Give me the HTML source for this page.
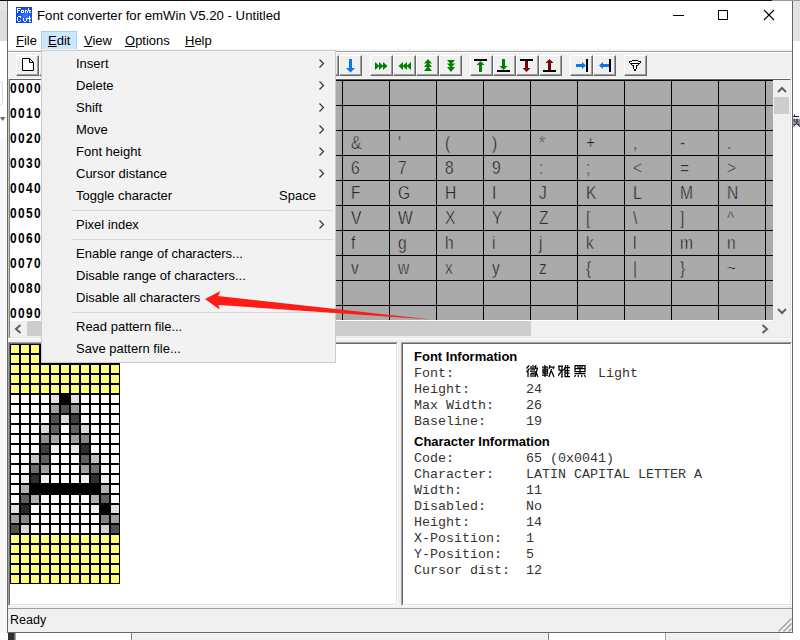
<!DOCTYPE html><html><head><meta charset="utf-8"><style>
html,body{margin:0;padding:0;width:800px;height:640px;overflow:hidden;background:#fff;position:relative}
div{position:absolute;box-sizing:border-box}
.t{white-space:pre;font-family:"Liberation Sans",sans-serif;font-size:13px;line-height:16px;color:#000}
.m{font-family:"Liberation Mono",monospace;font-size:13.33px;line-height:16px;white-space:pre;color:#333}
</style></head><body>
<div style="left:0px;top:1px;width:7px;height:10px;background:#e4e5e8"></div>
<div style="left:0px;top:11px;width:7px;height:30px;background:#dcdde0"></div>
<div style="left:793px;top:1px;width:7px;height:40px;background:#e1e2e5"></div>
<div style="left:0px;top:0px;width:772px;height:1px;background:#111"></div>
<div style="left:772px;top:0px;width:28px;height:1px;background:#999"></div>
<div style="left:0px;top:41px;width:7px;height:592px;background:#fff"></div>
<div style="left:0px;top:139px;width:7px;height:494px;background:#f8f8f8"></div>
<div style="left:-6px;top:81px;width:9px;height:24px;border:1px solid #d6d6d6;border-radius:3px"></div>
<svg style="position:absolute;left:0;top:117px" width="6" height="5"><path d="M0 0 H5.5 L2.75 4 Z" fill="#5a6a8c"/></svg>
<div style="left:8px;top:633px;width:6px;height:7px;background:#303030"></div>
<div style="left:14px;top:633px;width:2px;height:7px;background:linear-gradient(90deg,#555,#bbb)"></div>
<div style="left:131px;top:633px;width:1px;height:7px;background:#808080"></div>
<div style="left:132px;top:633px;width:417px;height:7px;background:#f0f0f0"></div>
<div style="left:548px;top:633px;width:1px;height:7px;background:#808080"></div>
<div style="left:665px;top:633px;width:1px;height:7px;background:#a0a0a0"></div>
<div style="left:666px;top:633px;width:134px;height:7px;background:#f0f0f0"></div>
<div style="left:780px;top:633px;width:20px;height:7px;background:#fff"></div>
<svg style="position:absolute;left:793px;top:114px" width="7" height="13"><path d="M2 0.5 L0.5 3 M1 2.5 H6 M1 4.5 V8 H7 M1 6 H7 M4 4.5 V9 M0 10 H7 M3.5 9 L0.5 12.5 M4.5 10 L7 12.5" fill="none" stroke="#1a2040" stroke-width="1.1"/></svg>
<div style="left:7px;top:1px;width:786px;height:632px;background:#fff;border:1px solid #666;border-top:none"></div>
<div class="t" style="left:37px;top:8px;font-size:13.2px">Font converter for emWin V5.20 - Untitled</div>
<div style="left:41px;top:31px;width:36px;height:19px;background:#cce8ff;border:1px solid #99d1ff"></div>
<div class="t" style="left:16px;top:33px;"><u>F</u>ile</div>
<div class="t" style="left:48px;top:33px;"><u>E</u>dit</div>
<div class="t" style="left:84px;top:33px;"><u>V</u>iew</div>
<div class="t" style="left:125px;top:33px;"><u>O</u>ptions</div>
<div class="t" style="left:185px;top:33px;"><u>H</u>elp</div>
<div style="left:8px;top:49px;width:784px;height:2px;background:#f4f4f4"></div>
<div style="left:8px;top:51px;width:784px;height:1px;background:#a0a0a0"></div>
<div style="left:8px;top:52px;width:784px;height:580px;background:#f0f0f0;border-top:1px solid #fff"></div>
<div style="left:16px;top:7px;width:16px;height:16px;background:radial-gradient(circle at 60% 55%,#3a78ff,#0a3cf5 75%)"></div>
<svg style="position:absolute;left:16px;top:7px" width="16" height="16" shape-rendering="crispEdges"><g fill="#fff"><rect x="1" y="1" width="4" height="1"/><rect x="12" y="1" width="1" height="1"/><rect x="1" y="2" width="1" height="1"/><rect x="12" y="2" width="1" height="1"/><rect x="1" y="3" width="3" height="1"/><rect x="5" y="3" width="3" height="1"/><rect x="9" y="3" width="2" height="1"/><rect x="12" y="3" width="3" height="1"/><rect x="1" y="4" width="1" height="1"/><rect x="5" y="4" width="1" height="1"/><rect x="7" y="4" width="1" height="1"/><rect x="9" y="4" width="1" height="1"/><rect x="11" y="4" width="1" height="1"/><rect x="13" y="4" width="1" height="1"/><rect x="1" y="5" width="1" height="1"/><rect x="5" y="5" width="3" height="1"/><rect x="9" y="5" width="1" height="1"/><rect x="11" y="5" width="1" height="1"/><rect x="13" y="5" width="2" height="1"/><rect x="2" y="9" width="3" height="1"/><rect x="13" y="9" width="1" height="1"/><rect x="1" y="10" width="1" height="1"/><rect x="4" y="10" width="1" height="1"/><rect x="13" y="10" width="1" height="1"/><rect x="1" y="11" width="1" height="1"/><rect x="7" y="11" width="1" height="1"/><rect x="10" y="11" width="1" height="1"/><rect x="11" y="11" width="4" height="1"/><rect x="1" y="12" width="1" height="1"/><rect x="7" y="12" width="1" height="1"/><rect x="10" y="12" width="1" height="1"/><rect x="13" y="12" width="1" height="1"/><rect x="1" y="13" width="1" height="1"/><rect x="4" y="13" width="1" height="1"/><rect x="7" y="13" width="1" height="1"/><rect x="10" y="13" width="1" height="1"/><rect x="13" y="13" width="1" height="1"/><rect x="2" y="14" width="2" height="1"/><rect x="8" y="14" width="2" height="1"/><rect x="13" y="14" width="2" height="1"/></g></svg>
<div style="left:673px;top:15px;width:11px;height:1px;background:#000"></div>
<div style="left:718px;top:10px;width:10px;height:10px;border:1px solid #000"></div>
<svg style="position:absolute;left:763px;top:9px" width="12" height="12"><path d="M1 1 L11 11 M11 1 L1 11" stroke="#000" stroke-width="1.1"/></svg>
<div style="left:16px;top:55px;width:23px;height:21px;background:#f0f0f0;border-left:1px solid #fff;border-top:1px solid #fff;border-right:1px solid #696969;border-bottom:1px solid #696969;box-shadow:inset -1px -1px 0 #a0a0a0"></div>
<div style="left:39px;top:55px;width:23px;height:21px;background:#f0f0f0;border-left:1px solid #fff;border-top:1px solid #fff;border-right:1px solid #696969;border-bottom:1px solid #696969;box-shadow:inset -1px -1px 0 #a0a0a0"></div>
<div style="left:316px;top:55px;width:23px;height:21px;background:#f0f0f0;border-left:1px solid #fff;border-top:1px solid #fff;border-right:1px solid #696969;border-bottom:1px solid #696969;box-shadow:inset -1px -1px 0 #a0a0a0"></div>
<div style="left:339px;top:55px;width:23px;height:21px;background:#f0f0f0;border-left:1px solid #fff;border-top:1px solid #fff;border-right:1px solid #696969;border-bottom:1px solid #696969;box-shadow:inset -1px -1px 0 #a0a0a0"></div>
<div style="left:370px;top:55px;width:23px;height:21px;background:#f0f0f0;border-left:1px solid #fff;border-top:1px solid #fff;border-right:1px solid #696969;border-bottom:1px solid #696969;box-shadow:inset -1px -1px 0 #a0a0a0"></div>
<div style="left:393px;top:55px;width:23px;height:21px;background:#f0f0f0;border-left:1px solid #fff;border-top:1px solid #fff;border-right:1px solid #696969;border-bottom:1px solid #696969;box-shadow:inset -1px -1px 0 #a0a0a0"></div>
<div style="left:416px;top:55px;width:23px;height:21px;background:#f0f0f0;border-left:1px solid #fff;border-top:1px solid #fff;border-right:1px solid #696969;border-bottom:1px solid #696969;box-shadow:inset -1px -1px 0 #a0a0a0"></div>
<div style="left:439px;top:55px;width:23px;height:21px;background:#f0f0f0;border-left:1px solid #fff;border-top:1px solid #fff;border-right:1px solid #696969;border-bottom:1px solid #696969;box-shadow:inset -1px -1px 0 #a0a0a0"></div>
<div style="left:470px;top:55px;width:23px;height:21px;background:#f0f0f0;border-left:1px solid #fff;border-top:1px solid #fff;border-right:1px solid #696969;border-bottom:1px solid #696969;box-shadow:inset -1px -1px 0 #a0a0a0"></div>
<div style="left:493px;top:55px;width:23px;height:21px;background:#f0f0f0;border-left:1px solid #fff;border-top:1px solid #fff;border-right:1px solid #696969;border-bottom:1px solid #696969;box-shadow:inset -1px -1px 0 #a0a0a0"></div>
<div style="left:516px;top:55px;width:23px;height:21px;background:#f0f0f0;border-left:1px solid #fff;border-top:1px solid #fff;border-right:1px solid #696969;border-bottom:1px solid #696969;box-shadow:inset -1px -1px 0 #a0a0a0"></div>
<div style="left:539px;top:55px;width:23px;height:21px;background:#f0f0f0;border-left:1px solid #fff;border-top:1px solid #fff;border-right:1px solid #696969;border-bottom:1px solid #696969;box-shadow:inset -1px -1px 0 #a0a0a0"></div>
<div style="left:570px;top:55px;width:23px;height:21px;background:#f0f0f0;border-left:1px solid #fff;border-top:1px solid #fff;border-right:1px solid #696969;border-bottom:1px solid #696969;box-shadow:inset -1px -1px 0 #a0a0a0"></div>
<div style="left:593px;top:55px;width:23px;height:21px;background:#f0f0f0;border-left:1px solid #fff;border-top:1px solid #fff;border-right:1px solid #696969;border-bottom:1px solid #696969;box-shadow:inset -1px -1px 0 #a0a0a0"></div>
<div style="left:624px;top:55px;width:23px;height:21px;background:#f0f0f0;border-left:1px solid #fff;border-top:1px solid #fff;border-right:1px solid #696969;border-bottom:1px solid #696969;box-shadow:inset -1px -1px 0 #a0a0a0"></div>
<svg style="position:absolute;left:22px;top:58px" width="13" height="14"><path d="M0.5 0.5 H7.5 L11.5 4.5 V12.5 H0.5 Z" fill="#fff" stroke="#000" stroke-width="1"/><path d="M7.5 0.5 V4.5 H11.5" fill="none" stroke="#000" stroke-width="1"/></svg>
<svg style="position:absolute;left:339px;top:55px" width="23" height="21"><path d="M10 4 H13 V13 H16 L11.5 17.5 L7 13 H10 Z" fill="#0a78e6"/></svg>
<svg style="position:absolute;left:370px;top:55px" width="23" height="21"><path d="M5 7 L9.5 11 L5 15 Z M9 7 L13.5 11 L9 15 Z M13 7 L17.5 11 L13 15 Z" fill="#008000"/></svg>
<svg style="position:absolute;left:393px;top:55px" width="23" height="21"><path d="M18 7 L13.5 11 L18 15 Z M14 7 L9.5 11 L14 15 Z M10 7 L5.5 11 L10 15 Z" fill="#008000"/></svg>
<svg style="position:absolute;left:416px;top:55px" width="23" height="21"><path d="M12 4 L16 8.5 H8 Z M12 7.5 L16 12 H8 Z M12 11 L16 16 H8 Z" fill="#008000"/></svg>
<svg style="position:absolute;left:439px;top:55px" width="23" height="21"><path d="M8 5 H16 L12 9.5 Z M8 8.5 H16 L12 13 Z M8 12 H16 L12 17 Z" fill="#008000"/></svg>
<svg style="position:absolute;left:470px;top:55px" width="23" height="21"><rect x="4" y="4" width="13" height="2" fill="#000"/><path d="M10.5 6 L14.5 10 H12 V17 H9 V10 H6.5 Z" fill="#008000"/></svg>
<svg style="position:absolute;left:493px;top:55px" width="23" height="21"><rect x="4" y="15" width="13" height="2" fill="#000"/><path d="M9 4 H12 V11 H14.5 L10.5 15 L6.5 11 H9 Z" fill="#008000"/></svg>
<svg style="position:absolute;left:516px;top:55px" width="23" height="21"><rect x="4" y="4" width="13" height="2" fill="#000"/><path d="M9 6 H12 V13 H14.5 L10.5 17 L6.5 13 H9 Z" fill="#800000"/></svg>
<svg style="position:absolute;left:539px;top:55px" width="23" height="21"><rect x="4" y="15" width="13" height="2" fill="#000"/><path d="M10.5 4 L14.5 8 H12 V15 H9 V8 H6.5 Z" fill="#800000"/></svg>
<svg style="position:absolute;left:570px;top:55px" width="23" height="21"><rect x="16" y="4" width="2" height="13" fill="#000"/><path d="M6 9 H12 V7 L16 10.5 L12 14 V12 H6 Z" fill="#0a78e6"/></svg>
<svg style="position:absolute;left:593px;top:55px" width="23" height="21"><rect x="16" y="4" width="2" height="13" fill="#000"/><path d="M16 9 H10 V7 L6 10.5 L10 14 V12 H16 Z" fill="#0a78e6"/></svg>
<svg style="position:absolute;left:624px;top:55px" width="23" height="21"><g shape-rendering="crispEdges"><path d="M8 6 H14 L16 7.5 L13 9 H9 L6 7.5 Z M8.5 9 H13.5 L12 11 V14 H10 V11 Z" fill="#fff"/><rect x="8" y="5" width="6" height="1" fill="#000"/><rect x="5" y="6" width="3" height="1" fill="#000"/><rect x="14" y="6" width="3" height="1" fill="#000"/><rect x="5" y="7" width="1" height="1" fill="#000"/><rect x="16" y="7" width="1" height="1" fill="#000"/><rect x="6" y="8" width="10" height="1" fill="#000"/><rect x="7" y="9" width="1" height="1" fill="#000"/><rect x="14" y="9" width="1" height="1" fill="#000"/><rect x="8" y="10" width="1" height="1" fill="#000"/><rect x="13" y="10" width="1" height="1" fill="#000"/><rect x="9" y="10" width="1" height="4" fill="#000"/><rect x="12" y="10" width="1" height="4" fill="#000"/><rect x="10" y="14" width="2" height="2" fill="#000"/></g></svg>
<div style="left:8px;top:78px;width:784px;height:261px;background:#fff;border-top:1px solid #fafafa;border-left:1px solid #c8c8c8;border-right:1px solid #fff;border-bottom:1px solid #fff"></div>
<div style="left:9px;top:79px;width:782px;height:259px;background:#fff;border-top:1px solid #606060;border-left:1px solid #808080;border-right:1px solid #e3e3e3;border-bottom:1px solid #e3e3e3"></div>
<div style="left:60px;top:80px;width:713px;height:240px;background:#aaa"></div>
<div style="left:60px;top:80px;width:1px;height:240px;background:#000"></div>
<div style="left:107px;top:80px;width:1px;height:240px;background:#000"></div>
<div style="left:154px;top:80px;width:1px;height:240px;background:#000"></div>
<div style="left:201px;top:80px;width:1px;height:240px;background:#000"></div>
<div style="left:248px;top:80px;width:1px;height:240px;background:#000"></div>
<div style="left:295px;top:80px;width:1px;height:240px;background:#000"></div>
<div style="left:342px;top:80px;width:1px;height:240px;background:#000"></div>
<div style="left:389px;top:80px;width:1px;height:240px;background:#000"></div>
<div style="left:436px;top:80px;width:1px;height:240px;background:#000"></div>
<div style="left:483px;top:80px;width:1px;height:240px;background:#000"></div>
<div style="left:530px;top:80px;width:1px;height:240px;background:#000"></div>
<div style="left:577px;top:80px;width:1px;height:240px;background:#000"></div>
<div style="left:624px;top:80px;width:1px;height:240px;background:#000"></div>
<div style="left:671px;top:80px;width:1px;height:240px;background:#000"></div>
<div style="left:718px;top:80px;width:1px;height:240px;background:#000"></div>
<div style="left:765px;top:80px;width:1px;height:240px;background:#000"></div>
<div style="left:60px;top:80px;width:713px;height:1px;background:#000"></div>
<div style="left:60px;top:105px;width:713px;height:1px;background:#000"></div>
<div style="left:60px;top:130px;width:713px;height:1px;background:#000"></div>
<div style="left:60px;top:155px;width:713px;height:1px;background:#000"></div>
<div style="left:60px;top:180px;width:713px;height:1px;background:#000"></div>
<div style="left:60px;top:205px;width:713px;height:1px;background:#000"></div>
<div style="left:60px;top:230px;width:713px;height:1px;background:#000"></div>
<div style="left:60px;top:255px;width:713px;height:1px;background:#000"></div>
<div style="left:60px;top:280px;width:713px;height:1px;background:#000"></div>
<div style="left:60px;top:305px;width:713px;height:1px;background:#000"></div>
<div class="t" style="left:10px;top:81px;font-weight:bold;font-size:14px;line-height:14px;letter-spacing:1.63px;transform:scaleX(0.85);transform-origin:0 0">0000</div>
<div class="t" style="left:10px;top:106px;font-weight:bold;font-size:14px;line-height:14px;letter-spacing:1.63px;transform:scaleX(0.85);transform-origin:0 0">0010</div>
<div class="t" style="left:10px;top:131px;font-weight:bold;font-size:14px;line-height:14px;letter-spacing:1.63px;transform:scaleX(0.85);transform-origin:0 0">0020</div>
<div class="t" style="left:10px;top:156px;font-weight:bold;font-size:14px;line-height:14px;letter-spacing:1.63px;transform:scaleX(0.85);transform-origin:0 0">0030</div>
<div class="t" style="left:10px;top:181px;font-weight:bold;font-size:14px;line-height:14px;letter-spacing:1.63px;transform:scaleX(0.85);transform-origin:0 0">0040</div>
<div class="t" style="left:10px;top:206px;font-weight:bold;font-size:14px;line-height:14px;letter-spacing:1.63px;transform:scaleX(0.85);transform-origin:0 0">0050</div>
<div class="t" style="left:10px;top:231px;font-weight:bold;font-size:14px;line-height:14px;letter-spacing:1.63px;transform:scaleX(0.85);transform-origin:0 0">0060</div>
<div class="t" style="left:10px;top:256px;font-weight:bold;font-size:14px;line-height:14px;letter-spacing:1.63px;transform:scaleX(0.85);transform-origin:0 0">0070</div>
<div class="t" style="left:10px;top:281px;font-weight:bold;font-size:14px;line-height:14px;letter-spacing:1.63px;transform:scaleX(0.85);transform-origin:0 0">0080</div>
<div class="t" style="left:10px;top:306px;font-weight:bold;font-size:14px;line-height:14px;letter-spacing:1.63px;transform:scaleX(0.85);transform-origin:0 0">0090</div>
<div style="left:773px;top:80px;width:17px;height:241px;background:#f0f0f0"></div>
<div style="left:774px;top:97px;width:15px;height:17px;background:#cdcdcd"></div>
<div style="left:10px;top:320px;width:763px;height:1px;background:#fff"></div>
<div style="left:10px;top:321px;width:763px;height:16px;background:#f0f0f0"></div>
<div style="left:27px;top:321px;width:504px;height:15px;background:#cdcdcd"></div>
<div style="left:773px;top:321px;width:17px;height:16px;background:#f0f0f0"></div>
<svg style="position:absolute;left:777px;top:85px" width="10" height="8"><path d="M1 7 L5 3 L9 7" fill="none" stroke="#606060" stroke-width="2"/></svg>
<svg style="position:absolute;left:777px;top:308px" width="10" height="8"><path d="M1 1 L5 5 L9 1" fill="none" stroke="#606060" stroke-width="2"/></svg>
<svg style="position:absolute;left:13px;top:324px" width="9" height="10"><path d="M7.5 1 L3 5 L7.5 9" fill="none" stroke="#606060" stroke-width="2"/></svg>
<svg style="position:absolute;left:761px;top:324px" width="9" height="10"><path d="M1.5 1 L6 5 L1.5 9" fill="none" stroke="#606060" stroke-width="2"/></svg>
<div style="left:8px;top:342px;width:390px;height:264px;background:#fff;border-top:1px solid #a0a0a0;border-left:1px solid #a0a0a0;border-right:1px solid #fff;border-bottom:1px solid #fff"></div>
<div style="left:9px;top:343px;width:388px;height:262px;background:#fff;border-top:1px solid #696969;border-left:1px solid #696969;border-right:1px solid #e3e3e3;border-bottom:1px solid #e3e3e3"></div>
<div style="left:401px;top:342px;width:391px;height:264px;background:#fff;border-top:1px solid #a0a0a0;border-left:1px solid #a0a0a0;border-right:1px solid #fff;border-bottom:1px solid #fff"></div>
<div style="left:402px;top:343px;width:389px;height:262px;background:#fff;border-top:1px solid #696969;border-left:1px solid #696969;border-right:1px solid #e3e3e3;border-bottom:1px solid #e3e3e3"></div>
<div style="left:8px;top:608px;width:784px;height:24px;background:#f0f0f0;border-top:1px solid #a0a0a0"></div>
<div class="t" style="left:10px;top:612px;font-size:12.5px">Ready</div>
<svg style="position:absolute;left:776px;top:616px" width="16" height="16"><path d="M2.5 15.5 L15.5 2.5 M7.5 15.5 L15.5 7.5 M12.5 15.5 L15.5 12.5" stroke="#a0a0a0" stroke-width="1.4"/></svg>
<div style="left:10px;top:344px;width:110px;height:240px;background:#000"></div>
<div style="left:11px;top:345px;width:8px;height:8px;background:#ffff80"></div><div style="left:21px;top:345px;width:8px;height:8px;background:#ffff80"></div><div style="left:31px;top:345px;width:8px;height:8px;background:#ffff80"></div><div style="left:41px;top:345px;width:8px;height:8px;background:#ffff80"></div><div style="left:51px;top:345px;width:8px;height:8px;background:#ffff80"></div><div style="left:61px;top:345px;width:8px;height:8px;background:#ffff80"></div><div style="left:71px;top:345px;width:8px;height:8px;background:#ffff80"></div><div style="left:81px;top:345px;width:8px;height:8px;background:#ffff80"></div><div style="left:91px;top:345px;width:8px;height:8px;background:#ffff80"></div><div style="left:101px;top:345px;width:8px;height:8px;background:#ffff80"></div><div style="left:111px;top:345px;width:8px;height:8px;background:#ffff80"></div><div style="left:11px;top:355px;width:8px;height:8px;background:#ffff80"></div><div style="left:21px;top:355px;width:8px;height:8px;background:#ffff80"></div><div style="left:31px;top:355px;width:8px;height:8px;background:#ffff80"></div><div style="left:41px;top:355px;width:8px;height:8px;background:#ffff80"></div><div style="left:51px;top:355px;width:8px;height:8px;background:#ffff80"></div><div style="left:61px;top:355px;width:8px;height:8px;background:#ffff80"></div><div style="left:71px;top:355px;width:8px;height:8px;background:#ffff80"></div><div style="left:81px;top:355px;width:8px;height:8px;background:#ffff80"></div><div style="left:91px;top:355px;width:8px;height:8px;background:#ffff80"></div><div style="left:101px;top:355px;width:8px;height:8px;background:#ffff80"></div><div style="left:111px;top:355px;width:8px;height:8px;background:#ffff80"></div><div style="left:11px;top:365px;width:8px;height:8px;background:#ffff80"></div><div style="left:21px;top:365px;width:8px;height:8px;background:#ffff80"></div><div style="left:31px;top:365px;width:8px;height:8px;background:#ffff80"></div><div style="left:41px;top:365px;width:8px;height:8px;background:#ffff80"></div><div style="left:51px;top:365px;width:8px;height:8px;background:#ffff80"></div><div style="left:61px;top:365px;width:8px;height:8px;background:#ffff80"></div><div style="left:71px;top:365px;width:8px;height:8px;background:#ffff80"></div><div style="left:81px;top:365px;width:8px;height:8px;background:#ffff80"></div><div style="left:91px;top:365px;width:8px;height:8px;background:#ffff80"></div><div style="left:101px;top:365px;width:8px;height:8px;background:#ffff80"></div><div style="left:111px;top:365px;width:8px;height:8px;background:#ffff80"></div><div style="left:11px;top:375px;width:8px;height:8px;background:#ffff80"></div><div style="left:21px;top:375px;width:8px;height:8px;background:#ffff80"></div><div style="left:31px;top:375px;width:8px;height:8px;background:#ffff80"></div><div style="left:41px;top:375px;width:8px;height:8px;background:#ffff80"></div><div style="left:51px;top:375px;width:8px;height:8px;background:#ffff80"></div><div style="left:61px;top:375px;width:8px;height:8px;background:#ffff80"></div><div style="left:71px;top:375px;width:8px;height:8px;background:#ffff80"></div><div style="left:81px;top:375px;width:8px;height:8px;background:#ffff80"></div><div style="left:91px;top:375px;width:8px;height:8px;background:#ffff80"></div><div style="left:101px;top:375px;width:8px;height:8px;background:#ffff80"></div><div style="left:111px;top:375px;width:8px;height:8px;background:#ffff80"></div><div style="left:11px;top:385px;width:8px;height:8px;background:#ffff80"></div><div style="left:21px;top:385px;width:8px;height:8px;background:#ffff80"></div><div style="left:31px;top:385px;width:8px;height:8px;background:#ffff80"></div><div style="left:41px;top:385px;width:8px;height:8px;background:#ffff80"></div><div style="left:51px;top:385px;width:8px;height:8px;background:#ffff80"></div><div style="left:61px;top:385px;width:8px;height:8px;background:#ffff80"></div><div style="left:71px;top:385px;width:8px;height:8px;background:#ffff80"></div><div style="left:81px;top:385px;width:8px;height:8px;background:#ffff80"></div><div style="left:91px;top:385px;width:8px;height:8px;background:#ffff80"></div><div style="left:101px;top:385px;width:8px;height:8px;background:#ffff80"></div><div style="left:111px;top:385px;width:8px;height:8px;background:#ffff80"></div><div style="left:11px;top:395px;width:8px;height:8px;background:#fff"></div><div style="left:21px;top:395px;width:8px;height:8px;background:#fff"></div><div style="left:31px;top:395px;width:8px;height:8px;background:#fff"></div><div style="left:41px;top:395px;width:8px;height:8px;background:#fff"></div><div style="left:51px;top:395px;width:8px;height:8px;background:#e0e0e0"></div><div style="left:71px;top:395px;width:8px;height:8px;background:#e0e0e0"></div><div style="left:81px;top:395px;width:8px;height:8px;background:#fff"></div><div style="left:91px;top:395px;width:8px;height:8px;background:#fff"></div><div style="left:101px;top:395px;width:8px;height:8px;background:#fff"></div><div style="left:111px;top:395px;width:8px;height:8px;background:#fff"></div><div style="left:11px;top:405px;width:8px;height:8px;background:#fff"></div><div style="left:21px;top:405px;width:8px;height:8px;background:#fff"></div><div style="left:31px;top:405px;width:8px;height:8px;background:#fff"></div><div style="left:41px;top:405px;width:8px;height:8px;background:#fff"></div><div style="left:51px;top:405px;width:8px;height:8px;background:#a0a0a0"></div><div style="left:61px;top:405px;width:8px;height:8px;background:#505050"></div><div style="left:71px;top:405px;width:8px;height:8px;background:#999"></div><div style="left:81px;top:405px;width:8px;height:8px;background:#fff"></div><div style="left:91px;top:405px;width:8px;height:8px;background:#fff"></div><div style="left:101px;top:405px;width:8px;height:8px;background:#fff"></div><div style="left:111px;top:405px;width:8px;height:8px;background:#fff"></div><div style="left:11px;top:415px;width:8px;height:8px;background:#fff"></div><div style="left:21px;top:415px;width:8px;height:8px;background:#fff"></div><div style="left:31px;top:415px;width:8px;height:8px;background:#fff"></div><div style="left:41px;top:415px;width:8px;height:8px;background:#fff"></div><div style="left:51px;top:415px;width:8px;height:8px;background:#505050"></div><div style="left:61px;top:415px;width:8px;height:8px;background:#d8d8d8"></div><div style="left:71px;top:415px;width:8px;height:8px;background:#404040"></div><div style="left:81px;top:415px;width:8px;height:8px;background:#fff"></div><div style="left:91px;top:415px;width:8px;height:8px;background:#fff"></div><div style="left:101px;top:415px;width:8px;height:8px;background:#fff"></div><div style="left:111px;top:415px;width:8px;height:8px;background:#fff"></div><div style="left:11px;top:425px;width:8px;height:8px;background:#fff"></div><div style="left:21px;top:425px;width:8px;height:8px;background:#fff"></div><div style="left:31px;top:425px;width:8px;height:8px;background:#fff"></div><div style="left:41px;top:425px;width:8px;height:8px;background:#d8d8d8"></div><div style="left:51px;top:425px;width:8px;height:8px;background:#606060"></div><div style="left:61px;top:425px;width:8px;height:8px;background:#fff"></div><div style="left:71px;top:425px;width:8px;height:8px;background:#606060"></div><div style="left:81px;top:425px;width:8px;height:8px;background:#d8d8d8"></div><div style="left:91px;top:425px;width:8px;height:8px;background:#fff"></div><div style="left:101px;top:425px;width:8px;height:8px;background:#fff"></div><div style="left:111px;top:425px;width:8px;height:8px;background:#fff"></div><div style="left:11px;top:435px;width:8px;height:8px;background:#fff"></div><div style="left:21px;top:435px;width:8px;height:8px;background:#fff"></div><div style="left:31px;top:435px;width:8px;height:8px;background:#fff"></div><div style="left:41px;top:435px;width:8px;height:8px;background:#909090"></div><div style="left:51px;top:435px;width:8px;height:8px;background:#a8a8a8"></div><div style="left:61px;top:435px;width:8px;height:8px;background:#fff"></div><div style="left:71px;top:435px;width:8px;height:8px;background:#a0a0a0"></div><div style="left:81px;top:435px;width:8px;height:8px;background:#888"></div><div style="left:91px;top:435px;width:8px;height:8px;background:#fff"></div><div style="left:101px;top:435px;width:8px;height:8px;background:#fff"></div><div style="left:111px;top:435px;width:8px;height:8px;background:#fff"></div><div style="left:11px;top:445px;width:8px;height:8px;background:#fff"></div><div style="left:21px;top:445px;width:8px;height:8px;background:#fff"></div><div style="left:31px;top:445px;width:8px;height:8px;background:#fff"></div><div style="left:41px;top:445px;width:8px;height:8px;background:#404040"></div><div style="left:51px;top:445px;width:8px;height:8px;background:#f0f0f0"></div><div style="left:61px;top:445px;width:8px;height:8px;background:#fff"></div><div style="left:71px;top:445px;width:8px;height:8px;background:#e8e8e8"></div><div style="left:81px;top:445px;width:8px;height:8px;background:#303030"></div><div style="left:91px;top:445px;width:8px;height:8px;background:#fff"></div><div style="left:101px;top:445px;width:8px;height:8px;background:#fff"></div><div style="left:111px;top:445px;width:8px;height:8px;background:#fff"></div><div style="left:11px;top:455px;width:8px;height:8px;background:#fff"></div><div style="left:21px;top:455px;width:8px;height:8px;background:#fff"></div><div style="left:31px;top:455px;width:8px;height:8px;background:#c8c8c8"></div><div style="left:41px;top:455px;width:8px;height:8px;background:#606060"></div><div style="left:51px;top:455px;width:8px;height:8px;background:#fff"></div><div style="left:61px;top:455px;width:8px;height:8px;background:#fff"></div><div style="left:71px;top:455px;width:8px;height:8px;background:#fff"></div><div style="left:81px;top:455px;width:8px;height:8px;background:#606060"></div><div style="left:91px;top:455px;width:8px;height:8px;background:#c0c0c0"></div><div style="left:101px;top:455px;width:8px;height:8px;background:#fff"></div><div style="left:111px;top:455px;width:8px;height:8px;background:#fff"></div><div style="left:11px;top:465px;width:8px;height:8px;background:#fff"></div><div style="left:21px;top:465px;width:8px;height:8px;background:#fff"></div><div style="left:31px;top:465px;width:8px;height:8px;background:#707070"></div><div style="left:41px;top:465px;width:8px;height:8px;background:#a0a0a0"></div><div style="left:51px;top:465px;width:8px;height:8px;background:#fff"></div><div style="left:61px;top:465px;width:8px;height:8px;background:#fff"></div><div style="left:71px;top:465px;width:8px;height:8px;background:#fff"></div><div style="left:81px;top:465px;width:8px;height:8px;background:#a0a0a0"></div><div style="left:91px;top:465px;width:8px;height:8px;background:#707070"></div><div style="left:101px;top:465px;width:8px;height:8px;background:#fff"></div><div style="left:111px;top:465px;width:8px;height:8px;background:#fff"></div><div style="left:11px;top:475px;width:8px;height:8px;background:#fff"></div><div style="left:21px;top:475px;width:8px;height:8px;background:#f0f0f0"></div><div style="left:31px;top:475px;width:8px;height:8px;background:#303030"></div><div style="left:41px;top:475px;width:8px;height:8px;background:#f0f0f0"></div><div style="left:51px;top:475px;width:8px;height:8px;background:#fff"></div><div style="left:61px;top:475px;width:8px;height:8px;background:#fff"></div><div style="left:71px;top:475px;width:8px;height:8px;background:#fff"></div><div style="left:81px;top:475px;width:8px;height:8px;background:#f0f0f0"></div><div style="left:91px;top:475px;width:8px;height:8px;background:#303030"></div><div style="left:101px;top:475px;width:8px;height:8px;background:#f0f0f0"></div><div style="left:111px;top:475px;width:8px;height:8px;background:#fff"></div><div style="left:11px;top:485px;width:8px;height:8px;background:#fff"></div><div style="left:21px;top:485px;width:8px;height:8px;background:#b0b0b0"></div><div style="left:101px;top:485px;width:8px;height:8px;background:#b0b0b0"></div><div style="left:111px;top:485px;width:8px;height:8px;background:#fff"></div><div style="left:11px;top:495px;width:8px;height:8px;background:#fff"></div><div style="left:21px;top:495px;width:8px;height:8px;background:#606060"></div><div style="left:31px;top:495px;width:8px;height:8px;background:#b0b0b0"></div><div style="left:41px;top:495px;width:8px;height:8px;background:#fff"></div><div style="left:51px;top:495px;width:8px;height:8px;background:#fff"></div><div style="left:61px;top:495px;width:8px;height:8px;background:#fff"></div><div style="left:71px;top:495px;width:8px;height:8px;background:#fff"></div><div style="left:81px;top:495px;width:8px;height:8px;background:#fff"></div><div style="left:91px;top:495px;width:8px;height:8px;background:#b0b0b0"></div><div style="left:101px;top:495px;width:8px;height:8px;background:#606060"></div><div style="left:111px;top:495px;width:8px;height:8px;background:#fff"></div><div style="left:11px;top:505px;width:8px;height:8px;background:#e0e0e0"></div><div style="left:21px;top:505px;width:8px;height:8px;background:#282828"></div><div style="left:31px;top:505px;width:8px;height:8px;background:#fff"></div><div style="left:41px;top:505px;width:8px;height:8px;background:#fff"></div><div style="left:51px;top:505px;width:8px;height:8px;background:#fff"></div><div style="left:61px;top:505px;width:8px;height:8px;background:#fff"></div><div style="left:71px;top:505px;width:8px;height:8px;background:#fff"></div><div style="left:81px;top:505px;width:8px;height:8px;background:#fff"></div><div style="left:91px;top:505px;width:8px;height:8px;background:#f0f0f0"></div><div style="left:111px;top:505px;width:8px;height:8px;background:#e0e0e0"></div><div style="left:11px;top:515px;width:8px;height:8px;background:#a0a0a0"></div><div style="left:21px;top:515px;width:8px;height:8px;background:#888"></div><div style="left:31px;top:515px;width:8px;height:8px;background:#fff"></div><div style="left:41px;top:515px;width:8px;height:8px;background:#fff"></div><div style="left:51px;top:515px;width:8px;height:8px;background:#fff"></div><div style="left:61px;top:515px;width:8px;height:8px;background:#fff"></div><div style="left:71px;top:515px;width:8px;height:8px;background:#fff"></div><div style="left:81px;top:515px;width:8px;height:8px;background:#fff"></div><div style="left:91px;top:515px;width:8px;height:8px;background:#fff"></div><div style="left:101px;top:515px;width:8px;height:8px;background:#808080"></div><div style="left:111px;top:515px;width:8px;height:8px;background:#a0a0a0"></div><div style="left:11px;top:525px;width:8px;height:8px;background:#505050"></div><div style="left:21px;top:525px;width:8px;height:8px;background:#d8d8d8"></div><div style="left:31px;top:525px;width:8px;height:8px;background:#fff"></div><div style="left:41px;top:525px;width:8px;height:8px;background:#fff"></div><div style="left:51px;top:525px;width:8px;height:8px;background:#fff"></div><div style="left:61px;top:525px;width:8px;height:8px;background:#fff"></div><div style="left:71px;top:525px;width:8px;height:8px;background:#fff"></div><div style="left:81px;top:525px;width:8px;height:8px;background:#fff"></div><div style="left:91px;top:525px;width:8px;height:8px;background:#fff"></div><div style="left:101px;top:525px;width:8px;height:8px;background:#d0d0d0"></div><div style="left:111px;top:525px;width:8px;height:8px;background:#505050"></div><div style="left:11px;top:535px;width:8px;height:8px;background:#ffff80"></div><div style="left:21px;top:535px;width:8px;height:8px;background:#ffff80"></div><div style="left:31px;top:535px;width:8px;height:8px;background:#ffff80"></div><div style="left:41px;top:535px;width:8px;height:8px;background:#ffff80"></div><div style="left:51px;top:535px;width:8px;height:8px;background:#ffff80"></div><div style="left:61px;top:535px;width:8px;height:8px;background:#ffff80"></div><div style="left:71px;top:535px;width:8px;height:8px;background:#ffff80"></div><div style="left:81px;top:535px;width:8px;height:8px;background:#ffff80"></div><div style="left:91px;top:535px;width:8px;height:8px;background:#ffff80"></div><div style="left:101px;top:535px;width:8px;height:8px;background:#ffff80"></div><div style="left:111px;top:535px;width:8px;height:8px;background:#ffff80"></div><div style="left:11px;top:545px;width:8px;height:8px;background:#ffff80"></div><div style="left:21px;top:545px;width:8px;height:8px;background:#ffff80"></div><div style="left:31px;top:545px;width:8px;height:8px;background:#ffff80"></div><div style="left:41px;top:545px;width:8px;height:8px;background:#ffff80"></div><div style="left:51px;top:545px;width:8px;height:8px;background:#ffff80"></div><div style="left:61px;top:545px;width:8px;height:8px;background:#ffff80"></div><div style="left:71px;top:545px;width:8px;height:8px;background:#ffff80"></div><div style="left:81px;top:545px;width:8px;height:8px;background:#ffff80"></div><div style="left:91px;top:545px;width:8px;height:8px;background:#ffff80"></div><div style="left:101px;top:545px;width:8px;height:8px;background:#ffff80"></div><div style="left:111px;top:545px;width:8px;height:8px;background:#ffff80"></div><div style="left:11px;top:555px;width:8px;height:8px;background:#ffff80"></div><div style="left:21px;top:555px;width:8px;height:8px;background:#ffff80"></div><div style="left:31px;top:555px;width:8px;height:8px;background:#ffff80"></div><div style="left:41px;top:555px;width:8px;height:8px;background:#ffff80"></div><div style="left:51px;top:555px;width:8px;height:8px;background:#ffff80"></div><div style="left:61px;top:555px;width:8px;height:8px;background:#ffff80"></div><div style="left:71px;top:555px;width:8px;height:8px;background:#ffff80"></div><div style="left:81px;top:555px;width:8px;height:8px;background:#ffff80"></div><div style="left:91px;top:555px;width:8px;height:8px;background:#ffff80"></div><div style="left:101px;top:555px;width:8px;height:8px;background:#ffff80"></div><div style="left:111px;top:555px;width:8px;height:8px;background:#ffff80"></div><div style="left:11px;top:565px;width:8px;height:8px;background:#ffff80"></div><div style="left:21px;top:565px;width:8px;height:8px;background:#ffff80"></div><div style="left:31px;top:565px;width:8px;height:8px;background:#ffff80"></div><div style="left:41px;top:565px;width:8px;height:8px;background:#ffff80"></div><div style="left:51px;top:565px;width:8px;height:8px;background:#ffff80"></div><div style="left:61px;top:565px;width:8px;height:8px;background:#ffff80"></div><div style="left:71px;top:565px;width:8px;height:8px;background:#ffff80"></div><div style="left:81px;top:565px;width:8px;height:8px;background:#ffff80"></div><div style="left:91px;top:565px;width:8px;height:8px;background:#ffff80"></div><div style="left:101px;top:565px;width:8px;height:8px;background:#ffff80"></div><div style="left:111px;top:565px;width:8px;height:8px;background:#ffff80"></div><div style="left:11px;top:575px;width:8px;height:8px;background:#ffff80"></div><div style="left:21px;top:575px;width:8px;height:8px;background:#ffff80"></div><div style="left:31px;top:575px;width:8px;height:8px;background:#ffff80"></div><div style="left:41px;top:575px;width:8px;height:8px;background:#ffff80"></div><div style="left:51px;top:575px;width:8px;height:8px;background:#ffff80"></div><div style="left:61px;top:575px;width:8px;height:8px;background:#ffff80"></div><div style="left:71px;top:575px;width:8px;height:8px;background:#ffff80"></div><div style="left:81px;top:575px;width:8px;height:8px;background:#ffff80"></div><div style="left:91px;top:575px;width:8px;height:8px;background:#ffff80"></div><div style="left:101px;top:575px;width:8px;height:8px;background:#ffff80"></div><div style="left:111px;top:575px;width:8px;height:8px;background:#ffff80"></div>
<div class="t" style="left:414px;top:349px;font-weight:bold">Font Information</div>
<div class="m" style="left:414px;top:366px">Font:</div>
<div class="m" style="left:414px;top:382px">Height:</div>
<div class="m" style="left:526px;top:382px">24</div>
<div class="m" style="left:414px;top:398px">Max Width:</div>
<div class="m" style="left:526px;top:398px">26</div>
<div class="m" style="left:414px;top:414px">Baseline:</div>
<div class="m" style="left:526px;top:414px">19</div>
<div class="m" style="left:598px;top:366px">Light</div>
<div class="t" style="left:414px;top:434px;font-weight:bold">Character Information</div>
<div class="m" style="left:414px;top:451px">Code:</div>
<div class="m" style="left:526px;top:451px">65 (0x0041)</div>
<div class="m" style="left:414px;top:467px">Character:</div>
<div class="m" style="left:526px;top:467px">LATIN CAPITAL LETTER A</div>
<div class="m" style="left:414px;top:483px">Width:</div>
<div class="m" style="left:526px;top:483px">11</div>
<div class="m" style="left:414px;top:499px">Disabled:</div>
<div class="m" style="left:526px;top:499px">No</div>
<div class="m" style="left:414px;top:515px">Height:</div>
<div class="m" style="left:526px;top:515px">14</div>
<div class="m" style="left:414px;top:531px">X-Position:</div>
<div class="m" style="left:526px;top:531px">1</div>
<div class="m" style="left:414px;top:547px">Y-Position:</div>
<div class="m" style="left:526px;top:547px">5</div>
<div class="m" style="left:414px;top:563px">Cursor dist:</div>
<div class="m" style="left:526px;top:563px">12</div>
<svg style="position:absolute;left:526px;top:365px" width="13" height="13"><path d="M3 0.5 L0.5 3.5 M3.5 3.5 L0.5 7 M2 5.5 V12 M5 1 V4 M7 0 V4 M9 1 V4 M4.5 4 H9 M4 6 H9 M5 8 H9 V12 M5 8 V12 M7 8 V12 M10 0 L9 4 M9.5 3 H12 M11.5 3 L9 12 M9.5 6 L12 12" fill="none" stroke="#000" stroke-width="1.25"/></svg>
<svg style="position:absolute;left:542px;top:365px" width="13" height="13"><path d="M0 2 H6 M3 0 V12 M1 4 H5.5 V8 H1 Z M1 6 H5.5 M0 10 H6 M8 0 L7 4 M7.5 2 H12 L11 4 M9.5 4 L7 12 M9.5 6 L12 12" fill="none" stroke="#000" stroke-width="1.25"/></svg>
<svg style="position:absolute;left:558px;top:365px" width="13" height="13"><path d="M0 1 H5 M1 1 V5 H5.5 M4 1 V12 L3 11.5 M4 5 L0 11 M8 0 L6 5 M7 3 V12 M9.5 0 L10 2 M7 2.5 H12 M7 5.5 H11.5 M7 8 H11.5 M7 11.5 H12 M9.5 2.5 V11.5" fill="none" stroke="#000" stroke-width="1.25"/></svg>
<svg style="position:absolute;left:574px;top:365px" width="13" height="13"><path d="M1 0.5 H11 V6.5 H1 Z M1 3.5 H11 M6 0.5 V8.5 M3.5 1.5 L4.5 3 M8.5 1.5 L7.5 3 M0.5 8.5 H11.5 M1.5 10 L0.5 12 M4 10 L4.5 12 M7.5 10 L8 12 M10.5 10 L11.5 12" fill="none" stroke="#000" stroke-width="1.25"/></svg>
<div class="t" style="left:351px;top:130px;font-size:19px;line-height:25px;color:#000;-webkit-text-stroke:0.6px #aaa;transform:scaleX(0.82);transform-origin:0 0">&amp;</div>
<div class="t" style="left:398px;top:130px;font-size:19px;line-height:25px;color:#000;-webkit-text-stroke:0.6px #aaa;transform:scaleX(0.82);transform-origin:0 0">'</div>
<div class="t" style="left:445px;top:130px;font-size:19px;line-height:25px;color:#000;-webkit-text-stroke:0.6px #aaa;transform:scaleX(0.82);transform-origin:0 0">(</div>
<div class="t" style="left:492px;top:130px;font-size:19px;line-height:25px;color:#000;-webkit-text-stroke:0.6px #aaa;transform:scaleX(0.82);transform-origin:0 0">)</div>
<div class="t" style="left:539px;top:130px;font-size:19px;line-height:25px;color:#000;-webkit-text-stroke:0.6px #aaa;transform:scaleX(0.82);transform-origin:0 0">*</div>
<div class="t" style="left:586px;top:130px;font-size:19px;line-height:25px;color:#000;-webkit-text-stroke:0.6px #aaa;transform:scaleX(0.82);transform-origin:0 0">+</div>
<div class="t" style="left:633px;top:130px;font-size:19px;line-height:25px;color:#000;-webkit-text-stroke:0.6px #aaa;transform:scaleX(0.82);transform-origin:0 0">,</div>
<div class="t" style="left:680px;top:130px;font-size:19px;line-height:25px;color:#000;-webkit-text-stroke:0.6px #aaa;transform:scaleX(0.82);transform-origin:0 0">-</div>
<div class="t" style="left:727px;top:130px;font-size:19px;line-height:25px;color:#000;-webkit-text-stroke:0.6px #aaa;transform:scaleX(0.82);transform-origin:0 0">.</div>
<div class="t" style="left:351px;top:155px;font-size:19px;line-height:25px;color:#000;-webkit-text-stroke:0.6px #aaa;transform:scaleX(0.82);transform-origin:0 0">6</div>
<div class="t" style="left:398px;top:155px;font-size:19px;line-height:25px;color:#000;-webkit-text-stroke:0.6px #aaa;transform:scaleX(0.82);transform-origin:0 0">7</div>
<div class="t" style="left:445px;top:155px;font-size:19px;line-height:25px;color:#000;-webkit-text-stroke:0.6px #aaa;transform:scaleX(0.82);transform-origin:0 0">8</div>
<div class="t" style="left:492px;top:155px;font-size:19px;line-height:25px;color:#000;-webkit-text-stroke:0.6px #aaa;transform:scaleX(0.82);transform-origin:0 0">9</div>
<div class="t" style="left:539px;top:155px;font-size:19px;line-height:25px;color:#000;-webkit-text-stroke:0.6px #aaa;transform:scaleX(0.82);transform-origin:0 0">:</div>
<div class="t" style="left:586px;top:155px;font-size:19px;line-height:25px;color:#000;-webkit-text-stroke:0.6px #aaa;transform:scaleX(0.82);transform-origin:0 0">;</div>
<div class="t" style="left:633px;top:155px;font-size:19px;line-height:25px;color:#000;-webkit-text-stroke:0.6px #aaa;transform:scaleX(0.82);transform-origin:0 0">&lt;</div>
<div class="t" style="left:680px;top:155px;font-size:19px;line-height:25px;color:#000;-webkit-text-stroke:0.6px #aaa;transform:scaleX(0.82);transform-origin:0 0">=</div>
<div class="t" style="left:727px;top:155px;font-size:19px;line-height:25px;color:#000;-webkit-text-stroke:0.6px #aaa;transform:scaleX(0.82);transform-origin:0 0">&gt;</div>
<div class="t" style="left:351px;top:180px;font-size:19px;line-height:25px;color:#000;-webkit-text-stroke:0.6px #aaa;transform:scaleX(0.82);transform-origin:0 0">F</div>
<div class="t" style="left:398px;top:180px;font-size:19px;line-height:25px;color:#000;-webkit-text-stroke:0.6px #aaa;transform:scaleX(0.82);transform-origin:0 0">G</div>
<div class="t" style="left:445px;top:180px;font-size:19px;line-height:25px;color:#000;-webkit-text-stroke:0.6px #aaa;transform:scaleX(0.82);transform-origin:0 0">H</div>
<div class="t" style="left:492px;top:180px;font-size:19px;line-height:25px;color:#000;-webkit-text-stroke:0.6px #aaa;transform:scaleX(0.82);transform-origin:0 0">I</div>
<div class="t" style="left:539px;top:180px;font-size:19px;line-height:25px;color:#000;-webkit-text-stroke:0.6px #aaa;transform:scaleX(0.82);transform-origin:0 0">J</div>
<div class="t" style="left:586px;top:180px;font-size:19px;line-height:25px;color:#000;-webkit-text-stroke:0.6px #aaa;transform:scaleX(0.82);transform-origin:0 0">K</div>
<div class="t" style="left:633px;top:180px;font-size:19px;line-height:25px;color:#000;-webkit-text-stroke:0.6px #aaa;transform:scaleX(0.82);transform-origin:0 0">L</div>
<div class="t" style="left:680px;top:180px;font-size:19px;line-height:25px;color:#000;-webkit-text-stroke:0.6px #aaa;transform:scaleX(0.82);transform-origin:0 0">M</div>
<div class="t" style="left:727px;top:180px;font-size:19px;line-height:25px;color:#000;-webkit-text-stroke:0.6px #aaa;transform:scaleX(0.82);transform-origin:0 0">N</div>
<div class="t" style="left:351px;top:205px;font-size:19px;line-height:25px;color:#000;-webkit-text-stroke:0.6px #aaa;transform:scaleX(0.82);transform-origin:0 0">V</div>
<div class="t" style="left:398px;top:205px;font-size:19px;line-height:25px;color:#000;-webkit-text-stroke:0.6px #aaa;transform:scaleX(0.82);transform-origin:0 0">W</div>
<div class="t" style="left:445px;top:205px;font-size:19px;line-height:25px;color:#000;-webkit-text-stroke:0.6px #aaa;transform:scaleX(0.82);transform-origin:0 0">X</div>
<div class="t" style="left:492px;top:205px;font-size:19px;line-height:25px;color:#000;-webkit-text-stroke:0.6px #aaa;transform:scaleX(0.82);transform-origin:0 0">Y</div>
<div class="t" style="left:539px;top:205px;font-size:19px;line-height:25px;color:#000;-webkit-text-stroke:0.6px #aaa;transform:scaleX(0.82);transform-origin:0 0">Z</div>
<div class="t" style="left:586px;top:205px;font-size:19px;line-height:25px;color:#000;-webkit-text-stroke:0.6px #aaa;transform:scaleX(0.82);transform-origin:0 0">[</div>
<div class="t" style="left:633px;top:205px;font-size:19px;line-height:25px;color:#000;-webkit-text-stroke:0.6px #aaa;transform:scaleX(0.82);transform-origin:0 0">\</div>
<div class="t" style="left:680px;top:205px;font-size:19px;line-height:25px;color:#000;-webkit-text-stroke:0.6px #aaa;transform:scaleX(0.82);transform-origin:0 0">]</div>
<div class="t" style="left:727px;top:205px;font-size:19px;line-height:25px;color:#000;-webkit-text-stroke:0.6px #aaa;transform:scaleX(0.82);transform-origin:0 0">^</div>
<div class="t" style="left:351px;top:230px;font-size:19px;line-height:25px;color:#000;-webkit-text-stroke:0.6px #aaa;transform:scaleX(0.82);transform-origin:0 0">f</div>
<div class="t" style="left:398px;top:230px;font-size:19px;line-height:25px;color:#000;-webkit-text-stroke:0.6px #aaa;transform:scaleX(0.82);transform-origin:0 0">g</div>
<div class="t" style="left:445px;top:230px;font-size:19px;line-height:25px;color:#000;-webkit-text-stroke:0.6px #aaa;transform:scaleX(0.82);transform-origin:0 0">h</div>
<div class="t" style="left:492px;top:230px;font-size:19px;line-height:25px;color:#000;-webkit-text-stroke:0.6px #aaa;transform:scaleX(0.82);transform-origin:0 0">i</div>
<div class="t" style="left:539px;top:230px;font-size:19px;line-height:25px;color:#000;-webkit-text-stroke:0.6px #aaa;transform:scaleX(0.82);transform-origin:0 0">j</div>
<div class="t" style="left:586px;top:230px;font-size:19px;line-height:25px;color:#000;-webkit-text-stroke:0.6px #aaa;transform:scaleX(0.82);transform-origin:0 0">k</div>
<div class="t" style="left:633px;top:230px;font-size:19px;line-height:25px;color:#000;-webkit-text-stroke:0.6px #aaa;transform:scaleX(0.82);transform-origin:0 0">l</div>
<div class="t" style="left:680px;top:230px;font-size:19px;line-height:25px;color:#000;-webkit-text-stroke:0.6px #aaa;transform:scaleX(0.82);transform-origin:0 0">m</div>
<div class="t" style="left:727px;top:230px;font-size:19px;line-height:25px;color:#000;-webkit-text-stroke:0.6px #aaa;transform:scaleX(0.82);transform-origin:0 0">n</div>
<div class="t" style="left:351px;top:255px;font-size:19px;line-height:25px;color:#000;-webkit-text-stroke:0.6px #aaa;transform:scaleX(0.82);transform-origin:0 0">v</div>
<div class="t" style="left:398px;top:255px;font-size:19px;line-height:25px;color:#000;-webkit-text-stroke:0.6px #aaa;transform:scaleX(0.82);transform-origin:0 0">w</div>
<div class="t" style="left:445px;top:255px;font-size:19px;line-height:25px;color:#000;-webkit-text-stroke:0.6px #aaa;transform:scaleX(0.82);transform-origin:0 0">x</div>
<div class="t" style="left:492px;top:255px;font-size:19px;line-height:25px;color:#000;-webkit-text-stroke:0.6px #aaa;transform:scaleX(0.82);transform-origin:0 0">y</div>
<div class="t" style="left:539px;top:255px;font-size:19px;line-height:25px;color:#000;-webkit-text-stroke:0.6px #aaa;transform:scaleX(0.82);transform-origin:0 0">z</div>
<div class="t" style="left:586px;top:255px;font-size:19px;line-height:25px;color:#000;-webkit-text-stroke:0.6px #aaa;transform:scaleX(0.82);transform-origin:0 0">{</div>
<div class="t" style="left:633px;top:255px;font-size:19px;line-height:25px;color:#000;-webkit-text-stroke:0.6px #aaa;transform:scaleX(0.82);transform-origin:0 0">|</div>
<div class="t" style="left:680px;top:255px;font-size:19px;line-height:25px;color:#000;-webkit-text-stroke:0.6px #aaa;transform:scaleX(0.82);transform-origin:0 0">}</div>
<div class="t" style="left:727px;top:255px;font-size:19px;line-height:25px;color:#000;-webkit-text-stroke:0.6px #aaa;transform:scaleX(0.82);transform-origin:0 0">~</div>
<div style="left:41px;top:50px;width:295px;height:313px;background:#f2f2f2;border:1px solid #ccc"></div>
<div style="left:42px;top:51px;width:30px;height:311px;background:#f0f0f0"></div>
<div class="t" style="left:76px;top:56px;">Insert</div>
<svg style="position:absolute;left:319px;top:59px" width="6" height="9"><path d="M0.5 0.5 L4.5 4.5 L0.5 8.5" fill="none" stroke="#333" stroke-width="1.2"/></svg>
<div class="t" style="left:76px;top:78px;">Delete</div>
<svg style="position:absolute;left:319px;top:81px" width="6" height="9"><path d="M0.5 0.5 L4.5 4.5 L0.5 8.5" fill="none" stroke="#333" stroke-width="1.2"/></svg>
<div class="t" style="left:76px;top:100px;">Shift</div>
<svg style="position:absolute;left:319px;top:103px" width="6" height="9"><path d="M0.5 0.5 L4.5 4.5 L0.5 8.5" fill="none" stroke="#333" stroke-width="1.2"/></svg>
<div class="t" style="left:76px;top:122px;">Move</div>
<svg style="position:absolute;left:319px;top:125px" width="6" height="9"><path d="M0.5 0.5 L4.5 4.5 L0.5 8.5" fill="none" stroke="#333" stroke-width="1.2"/></svg>
<div class="t" style="left:76px;top:144px;">Font height</div>
<svg style="position:absolute;left:319px;top:147px" width="6" height="9"><path d="M0.5 0.5 L4.5 4.5 L0.5 8.5" fill="none" stroke="#333" stroke-width="1.2"/></svg>
<div class="t" style="left:76px;top:166px;">Cursor distance</div>
<svg style="position:absolute;left:319px;top:169px" width="6" height="9"><path d="M0.5 0.5 L4.5 4.5 L0.5 8.5" fill="none" stroke="#333" stroke-width="1.2"/></svg>
<div class="t" style="left:76px;top:188px;">Toggle character</div>
<div class="t" style="left:76px;top:217px;">Pixel index</div>
<svg style="position:absolute;left:319px;top:220px" width="6" height="9"><path d="M0.5 0.5 L4.5 4.5 L0.5 8.5" fill="none" stroke="#333" stroke-width="1.2"/></svg>
<div class="t" style="left:76px;top:246px;">Enable range of characters...</div>
<div class="t" style="left:76px;top:268px;">Disable range of characters...</div>
<div class="t" style="left:76px;top:290px;">Disable all characters</div>
<div class="t" style="left:76px;top:319px;">Read pattern file...</div>
<div class="t" style="left:76px;top:341px;">Save pattern file...</div>
<div class="t" style="left:279px;top:188px;">Space</div>
<div style="left:72px;top:210px;width:261px;height:1px;background:#d7d7d7"></div>
<div style="left:72px;top:239px;width:261px;height:1px;background:#d7d7d7"></div>
<div style="left:72px;top:312px;width:261px;height:1px;background:#d7d7d7"></div>
<svg style="position:absolute;left:0;top:0" width="800" height="640"><path d="M205 299 L220.5 291 L218 296 L431 319.5 L218.5 305 L219.5 309.5 Z" fill="#fe1c16"/></svg>
</body></html>
